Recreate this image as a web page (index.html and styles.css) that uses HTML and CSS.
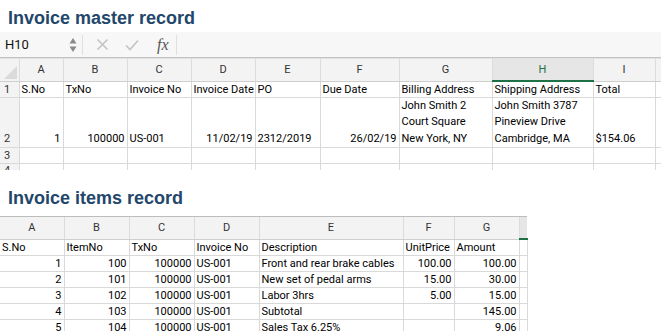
FILE: index.html
```html
<!DOCTYPE html>
<html lang="en">
<head>
  <meta charset="UTF-8" />
  <title>Invoice records</title>
  <meta name="viewport" content="width=device-width, initial-scale=1" />
  <link rel="stylesheet" href="styles.css">
</head>
<body>

  <section class="block">
    <h2 class="block-title">Invoice master record</h2>

    <div class="formula-bar">
      <span class="name-box">H10</span>
      <span class="spinner">
        <svg width="8" height="16" viewBox="0 0 8 16"><path d="M4 1 L7.5 6.5 H0.5 Z M4 15 L7.5 9.5 H0.5 Z" fill="#8a8a8a"/></svg>
      </span>
      <span class="bar-sep"></span>
      <span class="bar-icon cancel">
        <svg width="13" height="13" viewBox="0 0 13 13"><path d="M1.5 1.5 L11.5 11.5 M11.5 1.5 L1.5 11.5" stroke="#c4c4c4" stroke-width="1.6" fill="none"/></svg>
      </span>
      <span class="bar-icon enter">
        <svg width="14" height="12" viewBox="0 0 14 12"><path d="M1 6.5 L5 10.5 L13 1.5" stroke="#c4c4c4" stroke-width="1.6" fill="none"/></svg>
      </span>
      <span class="fx">fx</span>
      <span class="bar-sep"></span>
      <span class="formula-input"></span>
    </div>

    <div class="clip clip-master">
      <table class="sheet sheet-master">
        <colgroup>
          <col style="width:19px"><col style="width:44px"><col style="width:64px"><col style="width:64px">
          <col style="width:64px"><col style="width:65px"><col style="width:79px"><col style="width:93px">
          <col style="width:101px"><col style="width:62px"><col style="width:20px">
        </colgroup>
        <thead>
          <tr>
            <th class="corner"></th>
            <th>A</th><th>B</th><th>C</th><th>D</th><th>E</th><th>F</th><th>G</th>
            <th class="active">H</th><th>I</th><th></th>
          </tr>
        </thead>
        <tbody>
          <tr>
            <td class="rownum">1</td>
            <td>S.No</td><td>TxNo</td><td>Invoice No</td><td>Invoice Date</td><td>PO</td>
            <td>Due Date</td><td>Billing Address</td><td>Shipping Address</td><td>Total</td><td></td>
          </tr>
          <tr class="tall">
            <td class="rownum">2</td>
            <td class="num">1</td><td class="num">100000</td><td>US-001</td><td class="num">11/02/19</td>
            <td>2312/2019</td><td class="num">26/02/19</td>
            <td>John Smith 2<br>Court Square<br>New York, NY</td>
            <td>John Smith 3787<br>Pineview Drive<br>Cambridge, MA</td>
            <td>$154.06</td><td></td>
          </tr>
          <tr>
            <td class="rownum">3</td>
            <td></td><td></td><td></td><td></td><td></td><td></td><td></td><td></td><td></td><td></td>
          </tr>
          <tr class="cut">
            <td class="rownum">4</td>
            <td></td><td></td><td></td><td></td><td></td><td></td><td></td><td></td><td></td><td></td>
          </tr>
        </tbody>
      </table>
    </div>
  </section>

  <section class="block block-items">
    <h2 class="block-title">Invoice items record</h2>

    <div class="clip clip-items">
      <table class="sheet sheet-items">
        <colgroup>
          <col style="width:64px"><col style="width:65px"><col style="width:65px"><col style="width:65px">
          <col style="width:144px"><col style="width:51px"><col style="width:65px"><col style="width:8px">
        </colgroup>
        <thead>
          <tr>
            <th>A</th><th>B</th><th>C</th><th>D</th><th>E</th><th>F</th><th>G</th><th class="active"></th>
          </tr>
        </thead>
        <tbody>
          <tr>
            <td>S.No</td><td>ItemNo</td><td>TxNo</td><td>Invoice No</td><td>Description</td>
            <td>UnitPrice</td><td>Amount</td><td></td>
          </tr>
          <tr>
            <td class="num">1</td><td class="num">100</td><td class="num">100000</td><td>US-001</td>
            <td>Front and rear brake cables</td><td class="num">100.00</td><td class="num">100.00</td><td></td>
          </tr>
          <tr>
            <td class="num">2</td><td class="num">101</td><td class="num">100000</td><td>US-001</td>
            <td>New set of pedal arms</td><td class="num">15.00</td><td class="num">30.00</td><td></td>
          </tr>
          <tr>
            <td class="num">3</td><td class="num">102</td><td class="num">100000</td><td>US-001</td>
            <td>Labor 3hrs</td><td class="num">5.00</td><td class="num">15.00</td><td></td>
          </tr>
          <tr>
            <td class="num">4</td><td class="num">103</td><td class="num">100000</td><td>US-001</td>
            <td>Subtotal</td><td></td><td class="num">145.00</td><td></td>
          </tr>
          <tr>
            <td class="num">5</td><td class="num">104</td><td class="num">100000</td><td>US-001</td>
            <td>Sales Tax 6.25%</td><td></td><td class="num">9.06</td><td></td>
          </tr>
        </tbody>
      </table>
    </div>
  </section>

</body>
</html>
```

FILE: styles.css
```css
body {
  margin: 0;
  background: #fff;
  font-family: Roboto, 'Liberation Sans', sans-serif;
  color: #000;
  width: 661px;
  height: 331px;
  overflow: hidden;
}
.block-title {
  font-family: 'Liberation Sans', Arial, sans-serif;
  font-weight: bold;
  font-size: 18px;
  line-height: 22px;
  color: #23466b;
  margin: 0;
  padding: 7px 0 3px 8px;
}
.formula-bar {
  display: flex;
  align-items: center;
  height: 25px;
  background: #f7f7f7;
  border-bottom: 1px solid #c2c2c2;
  box-shadow: 0 1px 0 #e2e2e2;
}
.name-box {
  font-size: 13px;
  color: #111;
  width: 64px;
  padding-left: 5px;
}
.spinner {
  display: flex;
  width: 13px;
}
.bar-sep {
  width: 1px;
  height: 20px;
  background: #e0e0e0;
}
.bar-icon {
  display: flex;
  margin-left: 13px;
  width: 16px;
}
.fx {
  font-family: 'Liberation Serif', serif;
  font-style: italic;
  font-size: 16px;
  color: #555;
  margin: 0 7px 0 16px;
}
.formula-input {
  flex: 1;
}
.clip {
  overflow: hidden;
}
.clip-master {
  height: 111px;
  margin-top: 1px;
}
.sheet {
  border-collapse: collapse;
  table-layout: fixed;
  font-size: 11px;
}
.sheet-master {
  width: 675px;
}
.sheet-items {
  width: 527px;
}
.sheet th {
  height: 21px;
  padding: 0;
  font-weight: normal;
  color: #333;
  background: #f3f3f3;
  border-left: 1px solid #dcdcdc;
  border-bottom: 1px solid #cfcfcf;
  text-align: center;
}
.sheet th.active {
  background: #e6e6e6;
  color: #1e7145;
  border-bottom: 2px solid #1e7145;
}
.sheet th.corner {
  position: relative;
  border-left: none;
}
.sheet th.corner::after {
  content: "";
  position: absolute;
  right: 2px;
  bottom: 2px;
  border-left: 13px solid transparent;
  border-bottom: 13px solid #dadada;
}
.sheet td {
  height: 15px;
  padding: 0 2px;
  border: 1px solid #d9d9d9;
  white-space: nowrap;
  overflow: hidden;
  vertical-align: bottom;
  line-height: 15px;
}
.sheet td.num {
  text-align: right;
}
.sheet td.rownum {
  background: #f3f3f3;
  color: #333;
  padding-left: 4px;
  border-left: none;
}
.sheet tr.tall td {
  height: 47px;
  line-height: 16.3px;
}
.sheet tr.cut td {
  vertical-align: top;
  line-height: 13px;
}
.block-items {
  margin-top: 10px;
}
.block-items .block-title {
  padding-bottom: 7px;
}
.clip-items {
  height: 120px;
}
.sheet-items thead th {
  border-top: 1px solid #bdbdbd;
}
.sheet-items th:first-child,
.sheet-items td:first-child {
  border-left: none;
}
.sheet-items th.active {
  border-left: 1px solid #dcdcdc;
}
```
